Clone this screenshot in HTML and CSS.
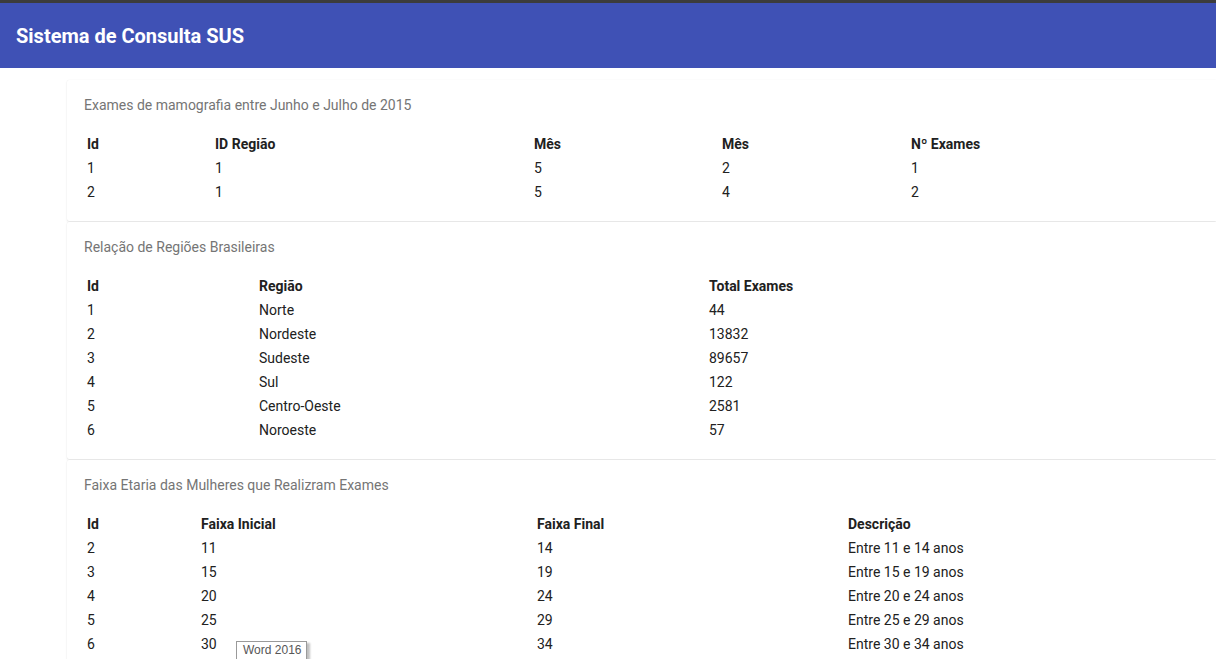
FILE: index.html
```html
<!DOCTYPE html>
<html lang="pt">
<head>
<meta charset="utf-8">
<title>Sistema de Consulta SUS</title>
<link rel="stylesheet" href="styles.css">
</head>
<body>
<div class="topline"></div>
<header class="appbar"><h1 class="apptitle">Sistema de Consulta SUS</h1></header>
<main class="content">
  <section class="card">
    <h2 class="card-title">Exames de mamografia entre Junho e Julho de 2015</h2>
    <div class="grid grid-a">
      <div class="th">Id</div><div class="th">ID Região</div><div class="th">Mês</div><div class="th">Mês</div><div class="th">Nº Exames</div>
      <div>1</div><div>1</div><div>5</div><div>2</div><div>1</div>
      <div>2</div><div>1</div><div>5</div><div>4</div><div>2</div>
    </div>
  </section>
  <section class="card">
    <h2 class="card-title">Relação de Regiões Brasileiras</h2>
    <div class="grid grid-b">
      <div class="th">Id</div><div class="th">Região</div><div class="th">Total Exames</div>
      <div>1</div><div>Norte</div><div>44</div>
      <div>2</div><div>Nordeste</div><div>13832</div>
      <div>3</div><div>Sudeste</div><div>89657</div>
      <div>4</div><div>Sul</div><div>122</div>
      <div>5</div><div>Centro-Oeste</div><div>2581</div>
      <div>6</div><div>Noroeste</div><div>57</div>
    </div>
  </section>
  <section class="card">
    <h2 class="card-title">Faixa Etaria das Mulheres que Realizram Exames</h2>
    <div class="grid grid-c">
      <div class="th">Id</div><div class="th">Faixa Inicial</div><div class="th">Faixa Final</div><div class="th">Descrição</div>
      <div>2</div><div>11</div><div>14</div><div>Entre 11 e 14 anos</div>
      <div>3</div><div>15</div><div>19</div><div>Entre 15 e 19 anos</div>
      <div>4</div><div>20</div><div>24</div><div>Entre 20 e 24 anos</div>
      <div>5</div><div>25</div><div>29</div><div>Entre 25 e 29 anos</div>
      <div>6</div><div class="tipcell">30<span class="tooltip">Word 2016</span></div><div>34</div><div>Entre 30 e 34 anos</div>
    </div>
  </section>
</main>
</body>
</html>
```
FILE: styles.css
```css
html, body {
  margin: 0;
  padding: 0;
  overflow: hidden;
  background: #ffffff;
  font-family: Roboto, "Liberation Sans", Arial, sans-serif;
  color: #212121;
}
.topline {
  height: 3px;
  background: #3c3c3c;
}
.appbar {
  height: 65px;
  background: #3f51b5;
  display: flex;
  align-items: center;
  padding-left: 16px;
}
.apptitle {
  margin: 0;
  color: #ffffff;
  font-size: 20px;
  font-weight: 700;
  letter-spacing: 0;
}
.content {
  padding-top: 12px;
  padding-left: 67px;
}
.card {
  background: #fff;
  box-shadow: 0 1px 2px rgba(0,0,0,0.10), 0 0 1px rgba(0,0,0,0.08);
  padding: 17px 0 17px 17px;
  margin-bottom: 1px;
  border-radius: 2px 0 0 2px;
}
.card-title {
  margin: 0 0 19px 0;
  font-size: 14px;
  line-height: 16px;
  font-weight: 400;
  color: #757575;
}
.grid {
  display: grid;
  margin-left: 3px;
  font-size: 14px;
  line-height: 24px;
  color: #212121;
}
.th {
  font-weight: 700;
}
.grid-a { grid-template-columns: 128px 319px 188px 189px 1fr; }
.grid-b { grid-template-columns: 172px 450px 1fr; }
.grid-c { grid-template-columns: 114px 336px 311px 1fr; }
.tipcell {
  position: relative;
}
.tooltip {
  position: absolute;
  left: 35px;
  top: 9px;
  padding: 0 5px 0 6px;
  height: 17px;
  line-height: 17px;
  font-size: 12px;
  color: #575757;
  background: #fff;
  border: 1px solid #9a9a9a;
  box-shadow: 3px 2px 2px rgba(0,0,0,0.25);
  white-space: nowrap;
  font-family: "Liberation Sans", Arial, sans-serif;
}
```
